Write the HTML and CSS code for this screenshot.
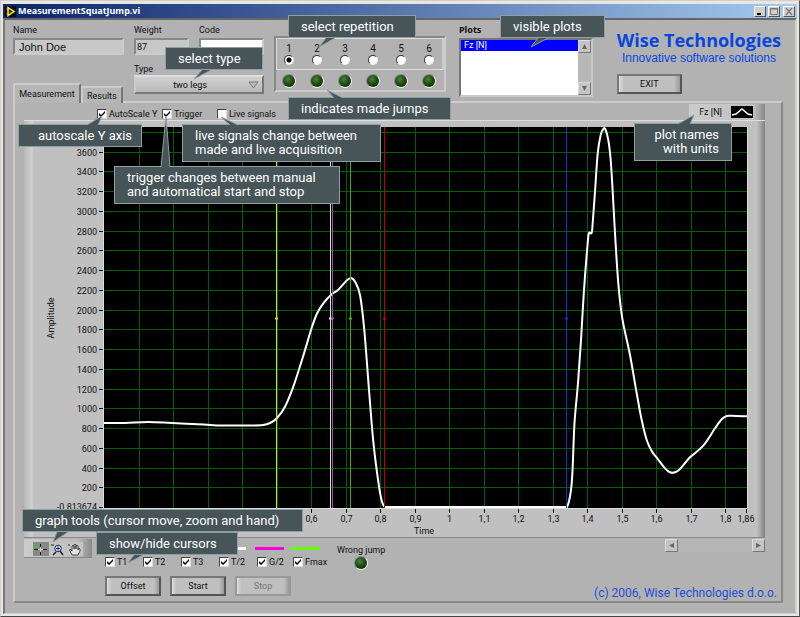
FILE: index.html
```
<!DOCTYPE html>
<html lang="en">
<head>
    <meta charset="utf-8">
    <title>MeasurementSquatJump.vi</title>
    <link rel="stylesheet" href="styles.css">
</head>
<body>
    <div class="window">
        <header class="titlebar">
            <svg class="app-icon" viewBox="0 0 11 11"><rect width="11" height="11" fill="#111"/><path d="M1 3H4M1 8H4M7 5.500H10" stroke="#c33"/><path d="M3 1.500L9 5.500L3 9.500Z" fill="#333" stroke="#ee3" stroke-width="1.500"/></svg>
            <h1>MeasurementSquatJump.vi</h1>
            <button class="win-btn" aria-label="Minimize"><svg viewBox="0 0 10 9"><path d="M2 7H6" stroke="#000" stroke-width="2"/></svg></button>
            <button class="win-btn" aria-label="Maximize"><svg viewBox="0 0 10 9"><path d="M1.500 1.500H8.500V7.500H1.500ZM1 2H9" fill="none" stroke="#777"/></svg></button>
            <button class="win-btn close" aria-label="Close"><svg viewBox="0 0 10 9"><path d="M2 1L8 8M8 1L2 8" stroke="#777" stroke-width="1.300"/></svg></button>
        </header>

        <main class="client">
            <section class="top">
                <div class="subject">
                    <div class="field name"><label for="name">Name</label><input id="name" type="text" value="John Doe"></div>
                    <div class="field weight"><label for="weight">Weight</label><input id="weight" type="text" value="87"></div>
                    <div class="field code"><label for="code">Code</label><input id="code" type="text"></div>
                    <div class="field type">
                        <label for="type">Type</label>
                        <div class="drop">
                            <select id="type"><option>two legs</option><option>left leg</option><option>right leg</option></select>
                            <svg viewBox="0 0 11 8"><path d="M1 1H10L5.500 7Z" fill="#bbb" stroke="#777"/></svg>
                        </div>
                    </div>
                </div>

                <div class="repetition">
                    <div class="reps">
                        <label>1<input type="radio" name="rep" checked></label>
                        <label>2<input type="radio" name="rep"></label>
                        <label>3<input type="radio" name="rep"></label>
                        <label>4<input type="radio" name="rep"></label>
                        <label>5<input type="radio" name="rep"></label>
                        <label>6<input type="radio" name="rep"></label>
                    </div>
                    <div class="leds">
                        <i class="led"></i><i class="led"></i><i class="led"></i><i class="led"></i><i class="led"></i><i class="led"></i>
                    </div>
                </div>

                <div class="plots">
                    <label for="plots">Plots</label>
                    <div class="listbox">
                        <select id="plots" size="4"><option selected>Fz [N]</option></select>
                        <div class="scroll-v">
                            <button class="arrow" aria-label="Scroll up"><svg viewBox="0 0 7 7"><path d="M3.500 1L6 6H1Z"/></svg></button>
                            <button class="arrow" aria-label="Scroll down"><svg viewBox="0 0 7 7"><path d="M3.500 6L6 1H1Z"/></svg></button>
                        </div>
                    </div>
                </div>

                <div class="brand">
                    <h2>Wise Technologies</h2>
                    <p>Innovative software solutions</p>
                    <button class="btn exit">EXIT</button>
                </div>
            </section>

            <nav class="tabs">
                <button class="tab active">Measurement</button>
                <button class="tab">Results</button>
            </nav>

            <section class="panel">
                <div class="options">
                    <label class="check autoscale"><input type="checkbox" checked>AutoScale Y</label>
                    <label class="check trigger"><input type="checkbox" checked>Trigger</label>
                    <label class="check"><input type="checkbox">Live signals</label>
                    <div class="legend">
                        <span>Fz [N]</span>
                        <svg viewBox="0 0 22 12"><rect width="22" height="12"/><path d="M1 9L5 8L11 3L17 8L21 9" fill="none" stroke="#fff" stroke-width="1.500"/></svg>
                    </div>
                </div>

                <div class="graph">
                    <svg viewBox="24 121 741 416" id="chart">
                        <rect x="104" y="127" width="643" height="381"/>
                        <g id="grid" class="grid"></g>
                        <path id="curve" class="curve"/>
                        <g id="cursors"></g>
                        <path d="M103.500 127V508.500H747.500V127" fill="none" stroke="#ddd"/>
                        <g id="axis" class="axis"></g>
                        <text class="axis" x="424" y="534" text-anchor="middle">Time</text>
                        <text class="axis" transform="translate(54 318) rotate(-90)" text-anchor="middle">Amplitude</text>
                    </svg>
                </div>

                <div class="bottom">
                    <div class="tools">
                        <button class="tool on" aria-label="Cursor move"><svg viewBox="0 0 15 13"><path d="M1 6.500H14M7.500 1V12" stroke="#111"/><path d="M5 6.500H10M7.500 4V9" stroke="#ccc"/><path d="M2 3H5" stroke="#3c3" stroke-width="2"/></svg></button>
                        <button class="tool" aria-label="Zoom"><svg viewBox="0 0 15 13"><circle cx="8" cy="5.500" r="3.300" fill="#dde" stroke="#226"/><path d="M6 5.500H10M8 3.500V7.500" stroke="#226"/><path d="M10 8L13 12M3 12L6 9" stroke="#222" stroke-width="1.500"/><path d="M1 2H4" stroke="#494" stroke-width="2"/></svg></button>
                        <button class="tool" aria-label="Hand"><svg viewBox="0 0 15 13"><path d="M5 12L2.500 7L3.500 6L5 8V3L6 2L7 3V6V2L8 1L9 2V6V3L10 2L11 3V7L12 5L13 6V8L11 12Z" fill="#e4e4e4" stroke="#222" stroke-width=".8"/><path d="M1 2H3" stroke="#494" stroke-width="2"/></svg></button>
                    </div>

                    <div class="controls">
                        <div class="cursors">
                            <label class="check t1"><input type="checkbox" checked>T1</label>
                            <label class="check t2"><input type="checkbox" checked>T2</label>
                            <label class="check t3"><input type="checkbox" checked>T3</label>
                            <label class="check thalf"><input type="checkbox" checked>T/2</label>
                            <label class="check ghalf"><input type="checkbox" checked>G/2</label>
                            <label class="check fmax"><input type="checkbox" checked>Fmax</label>
                        </div>
                        <div class="actions">
                            <button class="btn">Offset</button>
                            <button class="btn">Start</button>
                            <button class="btn" disabled>Stop</button>
                        </div>
                    </div>

                    <div class="wrong"><span>Wrong jump</span><i class="led"></i></div>

                    <div class="side">
                        <div class="scroll-h">
                            <button class="arrow" aria-label="Scroll left"><svg viewBox="0 0 7 7"><path d="M1 3.500L6 1V6Z"/></svg></button>
                            <button class="arrow" aria-label="Scroll right"><svg viewBox="0 0 7 7"><path d="M6 3.500L1 1V6Z"/></svg></button>
                        </div>
                        <p class="copyright">(c) 2006, Wise Technologies d.o.o.</p>
                    </div>
                </div>
            </section>
        </main>

        <!-- help callouts -->
        <div class="callout c-type"><svg class="tail"><path d="M36 22L28 31L45 22"/></svg>select type</div>
        <div class="callout c-rep"><svg class="tail"><path d="M37 22L30 31L46 22"/></svg>select repetition</div>
        <div class="callout c-plots"><svg class="tail"><path d="M37 22L30 31L47 22"/></svg>visible plots</div>
        <div class="callout c-jumps"><svg class="tail"><path d="M45 0L38 -8L54 0"/></svg>indicates made jumps</div>
        <div class="callout c-auto"><svg class="tail"><path d="M68 0L83 -9L79 0"/></svg>autoscale Y axis</div>
        <div class="callout c-live"><svg class="tail"><path d="M47 0L38 -8L55 0"/></svg>live signals change between<br>made and live acquisition</div>
        <div class="callout c-trigger"><svg class="tail"><path d="M46 0L51 -51L55 0"/></svg>trigger changes between manual<br>and automatical start and stop</div>
        <div class="callout c-names"><svg class="tail"><path d="M43 0L59 -9L55 0"/></svg>plot names<br>with units</div>
        <div class="callout c-cursors"><svg class="tail"><path d="M37 22L31 30L46 22"/></svg>show/hide cursors</div>
        <div class="callout c-tools"><svg class="tail"><path d="M34 22L30 32L45 22"/></svg>graph tools (cursor move, zoom and hand)</div>
    </div>
    <script src="chart.js"></script>
</body>
</html>
```
FILE: styles.css
```
* { box-sizing: border-box; }
body { margin: 0; background: #b2b2b2; font: 9px/12px Roboto, "Liberation Sans", sans-serif; color: #111; }
h1, h2, p { margin: 0; }
button, input, select { font: inherit; color: inherit; margin: 0; padding: 0; }
input, select { appearance: none; border-radius: 0; outline: none; }
label, span { white-space: nowrap; }

.window { position: relative; min-height: 100vh; display: flex; flex-direction: column; padding: 3px 2px 2px; border: 1px solid #d4d0c8; border-bottom-color: #444; border-right-color: #555; background: #e8e6e0; }
.titlebar { display: flex; align-items: center; gap: 2px; height: 14px; padding: 0 2px; background: linear-gradient(90deg, #0a2469, #a6caf0); }
.titlebar h1 { flex: 1; font: bold 9px/14px "Noto Sans", sans-serif; color: #fff; }
.app-icon { width: 11px; height: 11px; }
.win-btn { width: 12px; height: 11px; display: flex; background: #d4d0c8; border: 1px solid; border-color: #fff #555 #555 #fff; }
.win-btn svg { width: 10px; height: 9px; }
.close { margin-left: 1px; }

.client { flex: 1; padding: 4px 12px 9px 8px; background: #b2b2b2; border: 2px solid; border-color: #666 #d0d0d0 #d0d0d0 #777; border-bottom-width: 1px; }
.top { display: flex; align-items: flex-start; height: 76px; }

.subject { display: grid; grid-template-columns: 111px 55px 65px; column-gap: 10px; row-gap: 8px; }
.field { display: flex; flex-direction: column; gap: 2px; }
.field input { width: 100%; height: 17px; padding: 0 4px; background: #c8c8c8; border: 2px solid; border-color: #888 #ccc #ccc #888; }
.field.name input { font: 11px "Liberation Sans", sans-serif; }
.field.weight input { padding: 0 1px; }
.field.code input { background: #fff; }
.field.type { grid-column: 2 / 4; gap: 0; }
.drop { position: relative; }
.drop select { width: 100%; height: 19px; padding-right: 18px; text-align-last: center; background: linear-gradient(#d0d0d0, #b8b8b8); border: 2px solid; border-color: #ddd #777 #777 #ccc; }
.drop svg { position: absolute; right: 5px; top: 6px; width: 11px; height: 8px; }

.repetition { width: 172px; margin: 12px 0 0 10px; border: 2px solid; border-color: #888 #ccc #ccc #888; }
.reps { display: flex; gap: 4px; height: 32px; padding-top: 4px; border: 1px solid #ddd; border-right: 2px solid #ccc; }
.reps label { width: 24px; display: flex; flex-direction: column; align-items: center; font-size: 10px; }
.reps input { width: 10px; height: 10px; background: #fff; border: 1px solid; border-color: #333 #eee #eee #333; border-radius: 50%; }
.reps input:checked { background: radial-gradient(circle, #000 2px, #fff 3px); }
.leds { display: flex; gap: 14px; height: 20px; padding: 4px 6px; }
.led { flex: none; width: 14px; height: 14px; border-radius: 50%; border: 1px solid; border-color: #888 #eee #eee #888; background: radial-gradient(circle at 40% 35%, #4d7d3d, #1c4a10 50%, #0c2a06 80%); }

.plots { margin-left: 13px; width: 134px; }
.plots label { display: block; margin-bottom: 2px; font: bold 9px/12px "Noto Sans", sans-serif; }
.listbox { display: flex; height: 59px; border: 2px solid; border-color: #777 #c8c8c8 #c8c8c8 #777; }
.listbox select { flex: 1; min-width: 0; height: 55px; background: #fff; border: 0; overflow: hidden; }
.listbox option { height: 11px; min-height: 11px; padding: 0 3px; line-height: 11px; }
.listbox option:checked { background: linear-gradient(#00f, #00f); -webkit-text-fill-color: #fff; }
.scroll-v { display: flex; flex-direction: column; justify-content: space-between; background: #b8b8b8; }
.arrow { width: 13px; height: 13px; display: flex; align-items: center; justify-content: center; background: #c4c4c4; border: 1px solid; border-color: #ddd #777 #777 #ddd; }
.arrow svg { width: 7px; height: 7px; fill: #666; }

.brand { margin: 0 2px 0 auto; padding-top: 5px; display: flex; flex-direction: column; align-items: center; color: #0a46dc; }
.brand h2 { font: bold 18px/22px "Open Sans", sans-serif; white-space: nowrap; }
.brand p { font: 12px/14px "Liberation Sans", sans-serif; white-space: nowrap; }
.btn { width: 56px; height: 20px; background: linear-gradient(90deg, #ddd, #c0c0c0 8%, #c0c0c0 90%, #999); border: 2px solid; border-color: #777 #555 #555 #777; }
.btn:disabled { color: #777; border-color: #999; }
.exit { align-self: flex-start; width: 65px; margin-top: 9px; color: #111; }

.tabs { display: flex; align-items: flex-end; margin-top: -17px; margin-bottom: -2px; position: relative; width: max-content; }
.tab { height: 17px; padding: 0 4px; background: #b6b6b6; border: 2px solid; border-color: #ccc #777 transparent #ccc; border-bottom: 0; border-radius: 2px 2px 0 0; }
.tab.active { width: 68px; height: 20px; }

.panel { padding: 1px 0 2px; border: 2px solid; border-color: #ccc #888 #888 #ccc; background: #b2b2b2; }
.options { display: flex; align-items: flex-end; height: 16px; padding-left: 82px; }
.check { display: flex; align-items: center; gap: 2px; }
.check input { position: relative; width: 10px; height: 10px; background: #fff; border: 1px solid; border-color: #444 #ddd #ddd #444; }
.check input:checked::before { content: ""; position: absolute; inset: 1px; background: #000; clip-path: polygon(0 35%, 35% 65%, 100% 0, 100% 35%, 35% 100%, 0 70%); }
.autoscale { width: 65px; }
.trigger { width: 55px; }
.legend { display: flex; align-items: center; gap: 9px; height: 16px; margin: 0 16px 0 auto; padding: 0 12px 0 10px; background: linear-gradient(90deg, #ccc, #c0c0c0 85%, #888); }
.legend svg { width: 22px; height: 12px; }

.graph { margin: 0 16px 0 9px; background: linear-gradient(90deg, #b8b8b8, #d0d0d0 8px, #c0c0c0 10px, #c0c0c0 calc(100% - 8px), #808080); border-top: 1px solid #ddd; border-bottom: 1px solid #888; }
.graph svg { display: block; width: 100%; }
.grid { stroke: #006000; }
.axis { font-size: 9px; fill: #111; }
.curve { fill: none; stroke: #fff; stroke-width: 2; }

.bottom { display: flex; align-items: flex-start; padding: 1px 0 0 9px; }
.tools { display: flex; gap: 1px; width: 68px; height: 19px; padding: 3px 9px; background: linear-gradient(90deg, #ccc, #bbb 80%, #888); border-bottom: 1px solid #888; }
.tool { width: 16px; height: 14px; background: #c4c4c4; border: 0; }
.tool.on { background: #888; }
.tool svg { display: block; width: 15px; height: 13px; }
.controls { margin-left: 13px; padding-top: 8px; }
.cursors { display: grid; grid-template-columns: repeat(4, 38px) 36px 36px; }
.cursors .check { position: relative; padding-top: 9px; }
.cursors .check::after { content: ""; position: absolute; top: 0; left: -2px; width: 29px; height: 3px; background: currentColor; }
.t1::after { color: #ff0; }
.t2::after { color: #f00; }
.t3::after { color: #04f; }
.thalf::after { color: #fff; }
.ghalf::after { color: #f0d; }
.fmax::after { color: #6f0; }
.actions { display: flex; gap: 9px; margin-top: 8px; }
.wrong { display: flex; flex-direction: column; align-items: center; margin-left: 8px; padding-top: 5px; }
.side { margin-left: auto; }
.scroll-h { display: flex; justify-content: space-between; width: 100px; margin: 0 16px 0 auto; background: #b6b6b6; }
.copyright { margin: 35px 4px 0 0; font-size: 12px; line-height: 12px; color: #1e50d8; }

.callout { position: absolute; padding: 3px 12px; font-size: 13px; line-height: 15px; color: #fff; background: #475559; border: 1px solid #8ea0a2; white-space: nowrap; }
.tail { position: absolute; left: 0; top: 0; width: 100%; height: 100%; overflow: visible; fill: #475559; stroke: #8ea0a2; }
.c-type { left: 164px; top: 46px; width: 98px; }
.c-rep { left: 287px; top: 14px; width: 128px; }
.c-plots { left: 499px; top: 14px; width: 105px; }
.c-jumps { left: 287px; top: 96px; width: 163px; }
.c-auto { left: 17px; top: 123px; width: 124px; padding-left: 19px; }
.c-live { left: 181px; top: 123px; width: 199px; line-height: 14px; padding: 4px 12px; }
.c-trigger { left: 113px; top: 165px; width: 226px; line-height: 14px; padding: 4px 12px; }
.c-names { right: 67px; top: 122px; width: 98px; line-height: 14px; padding: 4px 12px; text-align: right; }
.c-cursors { left: 95px; top: 531px; width: 142px; }
.c-tools { left: 21px; top: 508px; width: 281px; }
```
FILE: chart.js
```
// graph scales: time in seconds, force in newtons
function xPos(t) { return Math.round(104 + t * 345) + 0.5; }
function yPos(v) { return Math.round(507 - v * 0.0987) + 0.5; }

let grid = '';
let axis = '';

for (let i = 1; i <= 18; i++) {
    const x = xPos(i / 10);
    grid += `<path d="M${x} 127V508"/>`;
    // the graph tools hint lies over the first five labels
    if (i > 5) axis += `<path d="M${x} 509V513" stroke="#111"/><text x="${x}" y="522" text-anchor="middle">${String(i / 10).replace('.', ',')}</text>`;
}
axis += '<path d="M746.5 509V513" stroke="#111"/><text x="746" y="522" text-anchor="middle">1,86</text>';

for (let v = 200; v <= 3800; v += 200) {
    const y = yPos(v);
    grid += `<path d="M104 ${y}H747"/>`;
    if (v < 3800) axis += `<path d="M99 ${y}H103" stroke="#111"/><text x="97" y="${y + 3}" text-anchor="end">${v}</text>`;
}
axis += '<path d="M99 507.5H103" stroke="#111"/><text x="97" y="510" text-anchor="end">-0.813674</text>';

const cursors = [[276.5, '#e0e000'], [330.5, '#ddd'], [332.5, '#a050a8'], [350.5, '#40b000'], [384.5, '#c00000'], [566.5, '#0038d0']];
document.getElementById('cursors').innerHTML = cursors.map(([x, color]) =>
    `<path d="M${x} 127V508" stroke="${color}"/><path d="M${x - 1.5} 318.5h3" stroke="${color}" stroke-width="2"/>`).join('');

const points = [
    [104, 423], [125, 423], [148, 422], [172, 423], [204, 424.5], [217, 425.5], [250, 425.5], [263, 425], [270, 423], [277, 418],
    [285, 406.7], [293.3, 386.7], [303, 356.7], [311.3, 329], [317, 313.5], [323.3, 303.3], [331.7, 294.3], [338, 290], [346.7, 280.5], [351, 278], [355, 281.7],
    [360, 295], [364.3, 330], [369, 390], [373.3, 441.7], [378.3, 481.7], [381.7, 500.7], [385, 507], [390, 507], [560, 507], [567, 507],
    [571, 490], [572.7, 466.7], [574.5, 423], [578, 383], [581, 340], [584, 290], [587.7, 243], [589, 233], [591.7, 233], [592.7, 223],
    [595, 191.7], [597.7, 153.3], [600.7, 135], [603.3, 129], [605.3, 129], [608.3, 140], [610.7, 160], [612.7, 191.7], [615, 233.3], [618.3, 283.3],
    [622.3, 318.3], [630, 355], [636.7, 393.3], [641.7, 420], [646.7, 440], [651.7, 451], [656.7, 457.7], [665, 468.3], [670, 472.3], [675, 472.3],
    [680, 469], [690, 457.3], [703.3, 445.7], [715, 428.3], [721.7, 419.3], [726.7, 416], [731.7, 415.7], [747, 416.3]
];

// smooth line through the samples
let d = `M${points[0]}`;
for (let i = 0; i < points.length - 1; i++) {
    const a = points[i - 1] || points[i], b = points[i], c = points[i + 1], e = points[i + 2] || c;
    // long flat parts stay straight
    const k = c[0] - b[0] > 100 || Math.abs(c[0] - e[0]) > 100 || b[0] - a[0] > 100 ? 0 : 1 / 6;
    d += `C${b[0] + (c[0] - a[0]) * k} ${b[1] + (c[1] - a[1]) * k} ${c[0] - (e[0] - b[0]) * k} ${c[1] - (e[1] - b[1]) * k} ${c}`;
}
document.getElementById('curve').setAttribute('d', d);
document.getElementById('grid').innerHTML = grid;
document.getElementById('axis').innerHTML = axis;
```
